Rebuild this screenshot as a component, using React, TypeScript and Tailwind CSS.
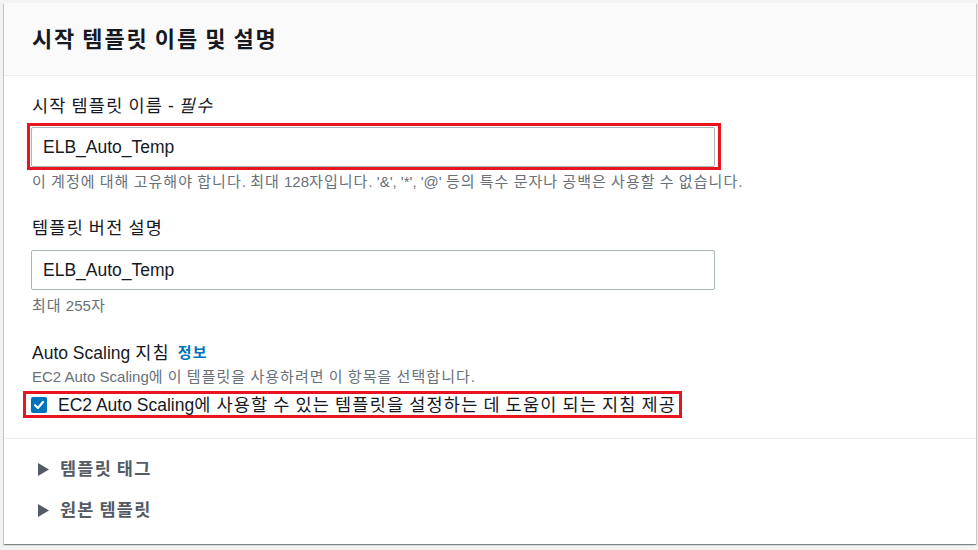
import React from "react";

const font = {
  fontFamily: '"Liberation Sans", "Noto Sans CJK KR", sans-serif',
};

// Hangul runs get a touch of tracking so they take the width of the original face
const HANGUL = /([\uAC00-\uD7A3]+)/;
const K: React.FC<{ t: string; bold?: boolean }> = ({ t, bold }) => (
  <>
    {t.split(HANGUL).map((s, i) =>
      i % 2 ? (
        <span key={i} className={bold ? "tracking-[0.085em]" : "tracking-[0.07em]"}>
          {s}
        </span>
      ) : (
        s
      )
    )}
  </>
);

const Annotated: React.FC<{ children: React.ReactNode; box: string }> = ({
  children,
  box,
}) => (
  <div className="relative">
    {children}
    <div className={`pointer-events-none absolute border-[3px] border-[#e8141f] ${box}`} />
  </div>
);

const TextInput: React.FC<{ value: string }> = ({ value }) => (
  <div className="w-[684px] h-[40px] flex items-center px-[11px] border border-[#aab7b8] rounded-[2px] bg-white text-[17.5px] text-[#16191f]">
    {value}
  </div>
);

const Expander: React.FC<{ label: string }> = ({ label }) => (
  <div className="flex items-center h-[41px] text-[#545b64] font-bold text-[17.5px]">
    <svg width="11" height="13" viewBox="0 0 11 13" className="ml-[34px] mr-[11px]">
      <path d="M0 0 L11 6.5 L0 13 Z" fill="#545b64" />
    </svg>
    <span>
      <K t={label} />
    </span>
  </div>
);

export default function App() {
  return (
    <div className="min-h-[550px] bg-[#f2f3f3] pt-[3px] pl-[4px] pr-[2px]" style={font}>
      <div className="bg-white shadow-[0_1px_1px_0_rgba(0,28,36,0.3),1px_1px_1px_0_rgba(0,28,36,0.15),-1px_1px_1px_0_rgba(0,28,36,0.15)] h-[541px]">
        <div className="h-[73px] bg-[#fafafa] border-b border-[#eaeded] flex items-center pl-[28px]">
          <h2 className="text-[22px] font-bold text-[#16191f]">
            <K t="시작 템플릿 이름 및 설명" bold />
          </h2>
        </div>

        <div className="pl-[27px] pt-[19px] pb-[24px] border-b border-[#eaeded]">
          <div className="text-[17.5px] text-[#16191f] leading-[22px] ml-[1px]">
            <K t="시작 템플릿 이름 - " />
            <i>
              <K t="필수" />
            </i>
          </div>
          <div className="mt-[10px]">
            <Annotated box="-left-[4px] -top-[4px] w-[694px] h-[47px]">
              <TextInput value="ELB_Auto_Temp" />
            </Annotated>
          </div>
          <div className="mt-[4px] text-[15px] leading-[22px] text-[#687078] ml-[1px]">
            <K t="이 계정에 대해 고유해야 합니다. 최대 128자입니다. '&', '*', '@' 등의 특수 문자나 공백은 사용할 수 없습니다." />
          </div>

          <div className="mt-[24px] text-[17.5px] text-[#16191f] leading-[22px] ml-[1px]">
            <K t="템플릿 버전 설명" />
          </div>
          <div className="mt-[11px]">
            <TextInput value="ELB_Auto_Temp" />
          </div>
          <div className="mt-[5px] text-[15px] leading-[22px] text-[#687078] ml-[1px]">
            <K t="최대 255자" />
          </div>

          <div className="mt-[25px] flex items-center gap-[8px] leading-[22px] ml-[1px]">
            <span className="text-[17.5px] text-[#16191f]">
              <K t="Auto Scaling 지침" />
            </span>
            <span className="text-[15px] font-bold text-[#0073bb]">
              <K t="정보" />
            </span>
          </div>
          <div className="mt-[2px] text-[15px] leading-[22px] text-[#687078] ml-[1px]">
            <K t="EC2 Auto Scaling에 이 템플릿을 사용하려면 이 항목을 선택합니다." />
          </div>
          <div className="mt-[8px]">
            <Annotated box="-left-[8px] -top-[5px] w-[659px] h-[27px]">
              <label className="flex items-center h-[18px] gap-[11px] text-[17.5px] text-[#16191f]">
                <span className="w-[16px] h-[16px] rounded-[2px] bg-[#0073bb] flex items-center justify-center">
                  <svg width="12" height="12" viewBox="0 0 12 12">
                    <path d="M2 6.2 L4.9 9 L10 3" stroke="#fff" strokeWidth="2.2" fill="none" strokeLinecap="round" strokeLinejoin="round" />
                  </svg>
                </span>
                <span>
                  <K t="EC2 Auto Scaling에 사용할 수 있는 템플릿을 설정하는 데 도움이 되는 지침 제공" />
                </span>
              </label>
            </Annotated>
          </div>
        </div>

        <div className="pt-[10px]">
          <Expander label="템플릿 태그" />
          <Expander label="원본 템플릿" />
        </div>
      </div>
    </div>
  );
}
